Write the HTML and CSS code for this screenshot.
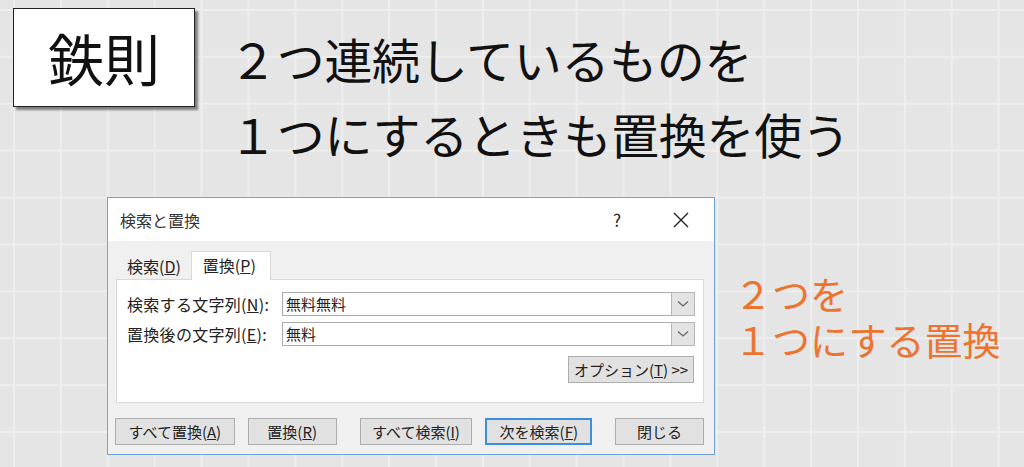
FILE: index.html
```html
<!DOCTYPE html>
<html lang="ja">
<head>
    <meta charset="UTF-8">
    <title>鉄則 置換</title>
    <link rel="stylesheet" href="styles.css">
</head>
<body>
    <div class="slide">
        <header class="head">
            <div class="rule-box">鉄則</div>
            <h1 class="title">２つ連続しているものを<br>１つにするときも置換を使う</h1>
        </header>

        <section class="main">
            <div class="dialog">
                <div class="titlebar">
                    <span class="dlg-title">検索と置換</span>
                    <span class="help">?</span>
                    <span class="close">
                        <svg width="16" height="16" viewBox="0 0 16 16"><path d="M1 1 L15 15 M15 1 L1 15" stroke="#222" stroke-width="1.4" fill="none"/></svg>
                    </span>
                </div>
                <div class="dlg-body">
                    <div class="tabs">
                        <div class="tab">検索(<u>D</u>)</div>
                        <div class="tab active">置換(<u>P</u>)</div>
                    </div>
                    <div class="panel">
                        <div class="field">
                            <label>検索する文字列(<u>N</u>):</label>
                            <div class="combo">
                                <span class="value">無料無料</span>
                                <span class="drop"><svg width="12" height="8" viewBox="0 0 12 8"><path d="M1 1.5 L6 6 L11 1.5" stroke="#666" stroke-width="1.3" fill="none"/></svg></span>
                            </div>
                        </div>
                        <div class="field">
                            <label>置換後の文字列(<u>E</u>):</label>
                            <div class="combo">
                                <span class="value">無料</span>
                                <span class="drop"><svg width="12" height="8" viewBox="0 0 12 8"><path d="M1 1.5 L6 6 L11 1.5" stroke="#666" stroke-width="1.3" fill="none"/></svg></span>
                            </div>
                        </div>
                        <div class="opt-row">
                            <button class="btn opt">オプション(<u>T</u>) &gt;&gt;</button>
                        </div>
                    </div>
                    <div class="actions">
                        <button class="btn w-all">すべて置換(<u>A</u>)</button>
                        <button class="btn w-one">置換(<u>R</u>)</button>
                        <button class="btn w-find sep">すべて検索(<u>I</u>)</button>
                        <button class="btn w-next default">次を検索(<u>F</u>)</button>
                        <button class="btn w-one sep">閉じる</button>
                    </div>
                </div>
            </div>

            <p class="note">２つを<br>１つにする置換</p>
        </section>
    </div>
</body>
</html>
```

FILE: styles.css
```css
* {
    box-sizing: border-box;
    margin: 0;
    padding: 0;
}

body {
    width: 1024px;
    height: 467px;
    overflow: hidden;
    font-family: "Noto Sans CJK JP", "Noto Sans", sans-serif;
    background-color: #e5e5e5;
    background-image:
        linear-gradient(to right, #eeeeee 1.5px, transparent 1.5px),
        linear-gradient(to bottom, #eeeeee 1.5px, transparent 1.5px);
    background-size: 46.9px 46.9px;
    background-position: 13px 9px;
}

.head {
    display: flex;
    padding: 8px 0 0 13px;
    height: 175px;
}

.rule-box {
    width: 182px;
    height: 99px;
    background-color: white;
    border: 1px solid #222;
    box-shadow: 3px 3px 2px rgba(0, 0, 0, 0.45);
    font-size: 56px;
    line-height: 95px;
    text-align: center;
    color: #111;
}

.title {
    margin: 13px 0 0 34px;
    font-size: 48px;
    font-weight: normal;
    line-height: 75px;
    color: #111;
    letter-spacing: -0.3px;
}

.main {
    display: flex;
    margin-top: 22px;
    padding-left: 107px;
}

.dialog {
    width: 608px;
    height: 258px;
    border: 1px solid #6fa3d6;
    background-color: #f0f0f0;
    font-size: 16px;
    color: #222;
}

.titlebar {
    display: flex;
    align-items: center;
    height: 43px;
    background-color: white;
    padding-left: 12px;
}

.dlg-title {
    flex: 1;
    color: #333;
}

.help {
    width: 20px;
    margin-right: 46px;
    font-size: 17px;
    text-align: center;
}

.close {
    display: flex;
    margin-right: 25px;
}

.dlg-body {
    padding: 10px 10px 0 8px;
}

.tabs {
    display: flex;
    align-items: flex-end;
    height: 29px;
    margin-bottom: -1px;
    position: relative;
    z-index: 1;
}

.tab {
    padding: 0 10px 0 11px;
    height: 27px;
    line-height: 27px;
}

.tab.active {
    height: 29px;
    line-height: 26px;
    background-color: white;
    border: 1px solid #d9d9d9;
    border-bottom: none;
    padding: 0 14px 0 11px;
}

.panel {
    height: 124px;
    background-color: white;
    border: 1px solid #d9d9d9;
    padding: 12px 7px 0 10px;
}

.field {
    display: flex;
    align-items: center;
    margin-bottom: 6px;
}

.field label {
    width: 155px;
    letter-spacing: 0.3px;
}

.combo {
    display: flex;
    align-items: stretch;
    width: 413px;
    height: 24px;
    border: 1px solid #ababab;
    font-size: 15px;
}

.combo .value {
    flex: 1;
    padding-left: 3px;
    line-height: 22px;
}

.drop {
    width: 24px;
    display: flex;
    align-items: center;
    justify-content: center;
    background-color: #e3e3e3;
    border: 1px solid #b5b5b5;
    margin: -1px -1px -1px 0;
}

.opt-row {
    display: flex;
    justify-content: flex-end;
    margin-top: 10px;
    padding-right: 2px;
}

.btn {
    height: 27px;
    font-family: inherit;
    font-size: 15px;
    color: #222;
    background-color: #e1e1e1;
    border: 1px solid #adadad;
}

.opt {
    width: 126px;
}

.actions {
    display: flex;
    gap: 13px;
    margin: 15px 0 0 -1px;
}

.w-all {
    width: 120px;
}

.w-one {
    width: 89px;
}

.w-find {
    width: 113px;
}

.w-next {
    width: 107px;
}

.sep {
    margin-left: 10px;
}

.default {
    border: 2px solid #3c8fd8;
}

.note {
    margin: 73px 0 0 19px;
    font-size: 38px;
    line-height: 46px;
    color: #ec7430;
}
```
